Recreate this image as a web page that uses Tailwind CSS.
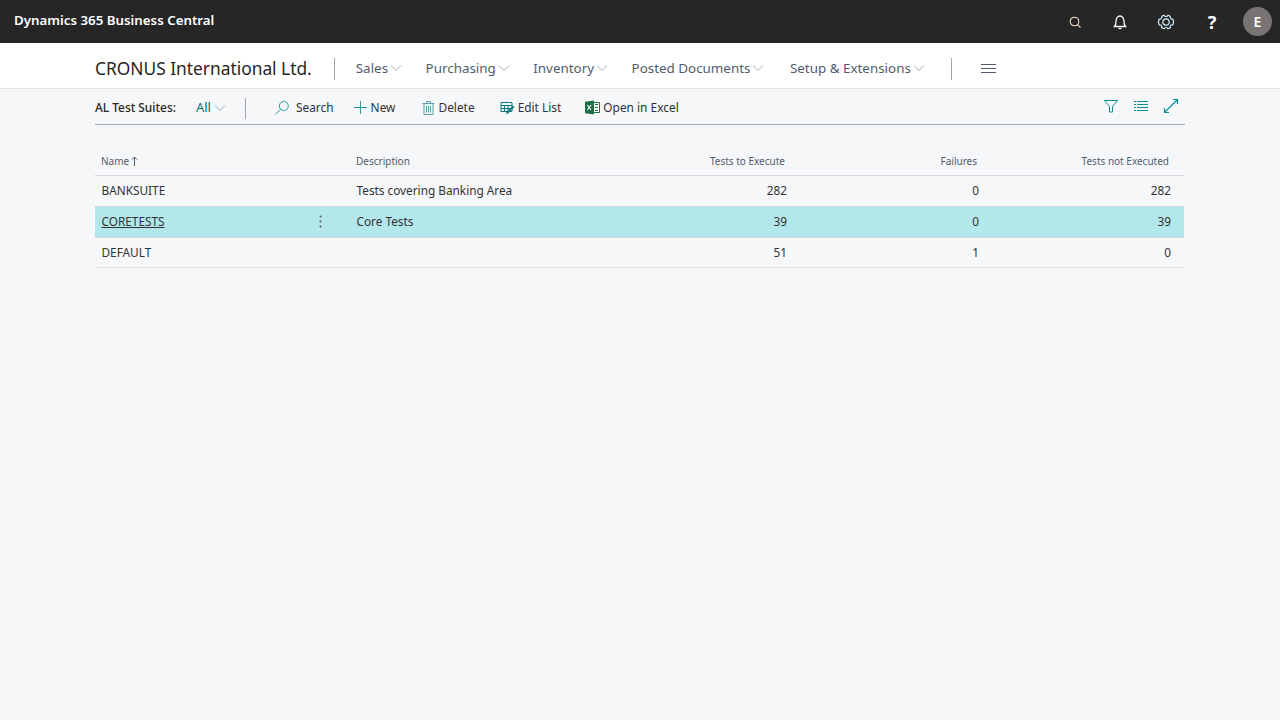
<!DOCTYPE html>
<html lang="en">
  <head>
    <meta charset="UTF-8" />
    <title>AL Test Suites</title>
    <script src="https://cdn.jsdelivr.net/npm/@tailwindcss/browser@4"></script>
  </head>
  <body class="h-[720px] overflow-hidden bg-[#f5f7f9] font-['Noto_Sans','Open_Sans',sans-serif] text-[#333]">
    <header class="flex h-[43px] items-center justify-between bg-[#262626] pl-[14px] pr-[8px] text-white">
      <span class="pb-[2px] text-[13.3px] font-semibold">Dynamics 365 Business Central</span>
      <div class="flex items-center gap-[23px]">
        <div class="flex items-center gap-[29px]">
          <svg class="h-4 w-4" viewBox="0 0 16 16" fill="none" stroke="#f3e7c4" stroke-width="1.1"><circle cx="7.500" cy="7.500" r="4.300"/><path d="m10.600 10.600 2.900 3"/></svg>
          <svg class="h-4 w-4" viewBox="0 0 16 16" fill="none" stroke="#fff" stroke-width="1.3"><path d="M2.500 12.500h11c-1-1-1.500-2.200-1.500-5C12 4.500 10.300 2 8 2S4 4.500 4 7.500c0 2.800-.5 4-1.500 5Z"/><path d="M6.500 14.500h3"/></svg>
          <svg class="h-[18px] w-[18px]" viewBox="0 0 18 18" fill="none" stroke="#d8f0ff" stroke-width="1.200"><path d="M7 2.200a2.200 2.200 0 0 0 4 0l2.300 1a2.200 2.200 0 0 0 2.500 3L16.500 8.500a2.200 2.200 0 0 0 0 1l-.7 2.300a2.200 2.200 0 0 0-2.500 3l-2.300 1a2.200 2.200 0 0 0-4 0l-2.300-1a2.200 2.200 0 0 0-2.500-3L1.500 9.500a2.200 2.200 0 0 0 0-1l.7-2.300a2.200 2.200 0 0 0 2.500-3Z"/><circle cx="9" cy="9" r="3.200"/></svg>
          <span class="w-4 text-center text-[18px] font-bold leading-none">?</span>
        </div>
        <span class="flex h-[29px] w-[29px] items-center justify-center rounded-full bg-[#787474] text-[14px] font-semibold">E</span>
      </div>
    </header>
    <nav class="flex h-[46px] items-center border-b border-[#e3e5e8] bg-white pl-[95px] pt-[6px] text-[13.4px] text-[#505c6d]">
      <span class="text-[17.350px] text-[#262626]">CRONUS International Ltd.</span>
      <span class="ml-[22px] mr-[21px] h-[22px] w-px bg-[#a0a5ab]"></span>
      <div class="flex items-center gap-[23.500px]">
        <span class="flex items-center gap-[2px]">Sales<svg class="h-3 w-3" viewBox="0 0 12 12" fill="none" stroke="#a6adb5"><path d="m1 3.500 5 5 5-5"/></svg></span>
        <span class="flex items-center gap-[2px]">Purchasing<svg class="h-3 w-3" viewBox="0 0 12 12" fill="none" stroke="#a6adb5"><path d="m1 3.500 5 5 5-5"/></svg></span>
        <span class="flex items-center gap-[2px]">Inventory<svg class="h-3 w-3" viewBox="0 0 12 12" fill="none" stroke="#a6adb5"><path d="m1 3.500 5 5 5-5"/></svg></span>
        <span class="flex items-center gap-[2px]">Posted Documents<svg class="h-3 w-3" viewBox="0 0 12 12" fill="none" stroke="#a6adb5"><path d="m1 3.500 5 5 5-5"/></svg></span>
        <span class="ml-[2px] flex items-center gap-[2px]">Setup &amp; Extensions<svg class="h-3 w-3" viewBox="0 0 12 12" fill="none" stroke="#a6adb5"><path d="m1 3.500 5 5 5-5"/></svg></span>
      </div>
      <span class="ml-[26.500px] h-[22px] w-px bg-[#a0a5ab]"></span>
      <svg class="ml-[29px] h-4 w-4" viewBox="0 0 16 16" stroke="#505c6d" fill="none"><path d="M0 3.500h15M0 7.500h15M0 11.500h15"/></svg>
    </nav>
    <main class="px-[95px]">
      <div class="flex h-[36px] items-center justify-between border-b border-[#a2abb8] pt-[3px] text-[11.900px]">
        <div class="flex items-center">
          <span class="text-[11.900px] font-medium text-[#262626]">AL Test Suites:</span>
          <span class="ml-5 flex items-center gap-[3px] text-[13px] text-[#00787e]">All<svg class="h-3 w-3" viewBox="0 0 12 12" fill="none" stroke="#a6adb5"><path d="m1 3.500 5 5 5-5"/></svg></span>
          <span class="ml-[19px] mr-[28px] h-[21px] w-px bg-[#a0a5ab]"></span>
          <div class="flex items-center">
            <span class="flex items-center gap-[6px]"><svg class="h-4 w-4" viewBox="0 0 16 16" fill="none" stroke="#2a9aa0"><circle cx="9.800" cy="6" r="4.500"/><path d="M6.500 9.300 1.300 14.500"/></svg>Search</span>
            <span class="ml-[19px] flex items-center gap-[3px]"><svg class="h-[15px] w-[15px]" viewBox="0 0 15 15" fill="none" stroke="#2a9aa0"><path d="M7.500 1v13M1 7.500h13"/></svg>New</span>
            <span class="ml-[27px] flex items-center gap-[3px]"><svg class="h-4 w-[13px]" viewBox="0 0 13 16" fill="none" stroke="#5f9ea6"><path d="M.5 3.500h12M4.500 3.500V1.500h4v2M2 3.500V14.500h9V3.500M4.500 6v6.500M6.500 6v6.500M8.500 6v6.500"/></svg>Delete</span>
            <span class="ml-[25px] flex items-center gap-[3px]"><svg class="h-[15px] w-[15px]" viewBox="0 0 15 15"><path fill="none" stroke="#0f7a82" d="M1 2.500h11v9H1ZM1 5.500h11M4.500 5.500v6M8 5.500v6M1 8.500h11"/><path fill="#0f7a82" d="M6.500 12 13 5.500l1.500 1.500L8 13.500l-2 .5Z"/></svg>Edit List</span>
            <span class="ml-[24px] flex items-center gap-[3px]"><svg class="h-[15px] w-[15px]" viewBox="0 0 15 15"><path fill="#fff" stroke="#1e7145" d="M7 2.500h7.500v10H7Z"/><path stroke="#1e7145" d="M10 4.500h3M10 7.500h3M10 10.500h3"/><path fill="#1e7145" d="M0 1.800 9 .5v14l-9-1.300Z"/><path stroke="#fff" stroke-width="1.200" fill="none" d="m2.500 5 3.500 5M6 5l-3.500 5"/></svg>Open in Excel</span>
          </div>
        </div>
        <div class="mb-[5px] mr-[6px] flex items-center gap-[14px]">
          <svg class="h-4 w-4" viewBox="0 0 16 16" fill="none" stroke="#0f8b92"><path d="M1.500 2.500h13L9.500 8.500V14h-3V8.500Z"/></svg>
          <svg class="h-4 w-4" viewBox="0 0 16 16" fill="none" stroke="#0f8b92"><path d="M1 3.500h2M4 3.500h11M1 6.500h2M4 6.500h11M1 9.500h2M4 9.500h11M1 12.500h2M4 12.500h11"/></svg>
          <svg class="h-4 w-4" viewBox="0 0 16 16" fill="none" stroke="#0f8b92" stroke-width="1.200"><path d="M10 1.500h4.500V6M14.500 1.500l-13 13M1.500 10v4.500H6"/></svg>
        </div>
      </div>
      <table class="mt-[20px] w-[1089px] table-fixed border-collapse text-[11.800px]">
        <thead>
          <tr class="h-[30px] border-b border-[#d4d7db] text-[10px] text-[#505c6d]">
            <th class="w-[255px] pl-[6px] pt-[3px] text-left font-normal">
              <span class="flex items-center gap-[2px]">Name<svg class="h-[10px] w-[7px]" viewBox="0 0 7 10" fill="none" stroke="#505c6d"><path d="M3.500 10V1M1 3.500 3.500 1 6 3.500"/></svg></span>
            </th>
            <th class="w-[200px] pl-[6px] pt-[3px] text-left font-normal">Description</th>
            <th class="w-[242px] pr-[7px] pt-[3px] text-right font-normal">Tests to Execute</th>
            <th class="w-[192px] pr-[7px] pt-[3px] text-right font-normal">Failures</th>
            <th class="pr-[15px] pt-[3px] text-right font-normal">Tests not Executed</th>
          </tr>
        </thead>
        <tbody>
          <tr class="h-[31px] border-b border-[#d4d7db]">
            <td class="pl-[6.500px]">BANKSUITE</td>
            <td class="pl-[6.500px] whitespace-nowrap">Tests covering Banking Area</td>
            <td class="pr-[5px] text-right">282</td>
            <td class="pr-[5px] text-right">0</td>
            <td class="pr-[13px] text-right">282</td>
          </tr>
          <tr class="h-[31px] border-b border-[#d4d7db] bg-[#b2e8ec]">
            <td class="pl-[6.500px]">
              <div class="flex items-center justify-between pr-[28px]">
                <span class="underline">CORETESTS</span>
                <svg class="h-[13px] w-[3px]" viewBox="0 0 3 13" fill="#555"><circle cx="1.500" cy="1.500" r="1"/><circle cx="1.500" cy="6.500" r="1"/><circle cx="1.500" cy="11.500" r="1"/></svg>
              </div>
            </td>
            <td class="pl-[6.500px]">Core Tests</td>
            <td class="pr-[5px] text-right">39</td>
            <td class="pr-[5px] text-right">0</td>
            <td class="pr-[13px] text-right">39</td>
          </tr>
          <tr class="h-[30px] border-b border-[#e1e3e6]">
            <td class="pl-[6.500px] pt-[2px]">DEFAULT</td>
            <td></td>
            <td class="pr-[5px] pt-[2px] text-right">51</td>
            <td class="pr-[5px] pt-[2px] text-right">1</td>
            <td class="pr-[13px] pt-[2px] text-right">0</td>
          </tr>
        </tbody>
      </table>
    </main>
  </body>
</html>
